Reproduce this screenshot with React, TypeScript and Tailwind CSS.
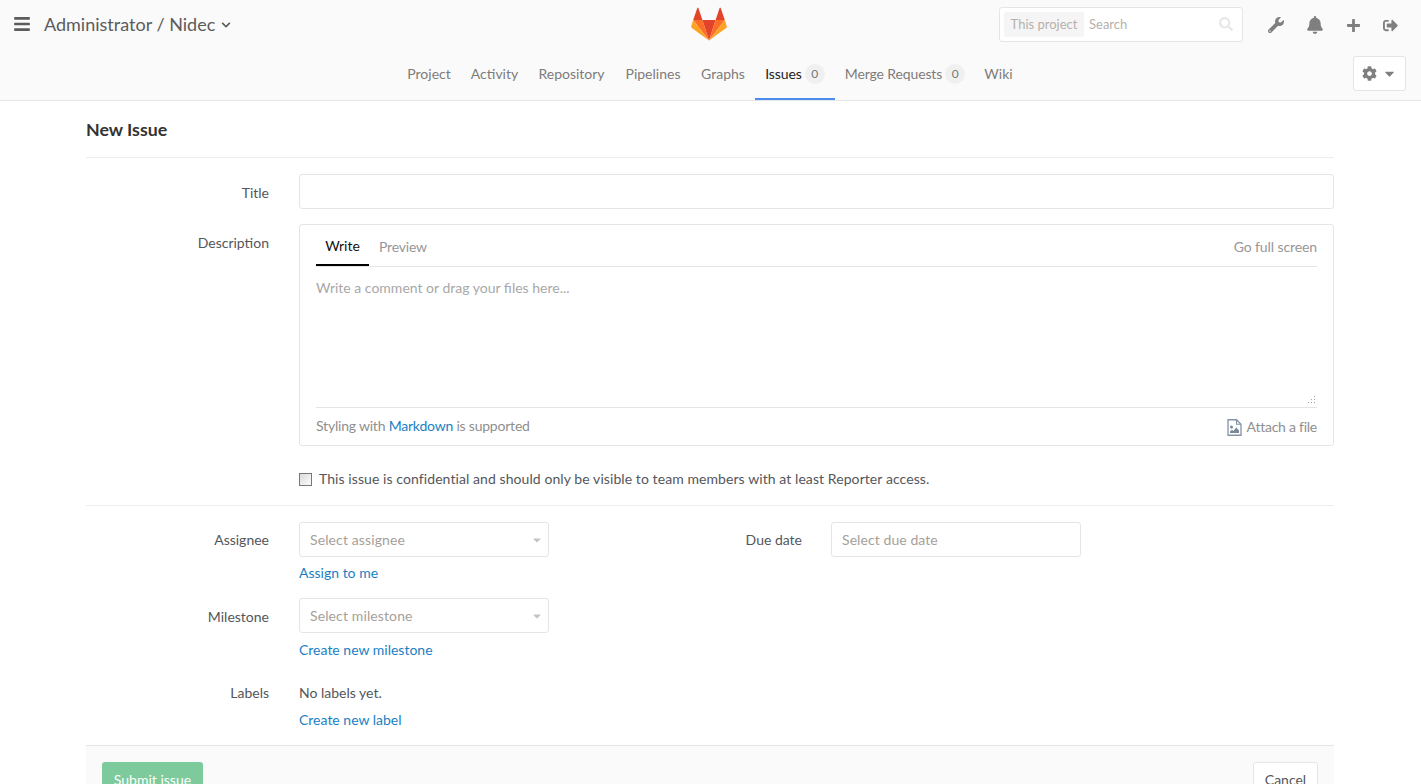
import React from "react";
import { FaBars, FaChevronDown, FaWrench, FaBell, FaPlus, FaSignOutAlt, FaCog, FaCaretDown, FaSearch } from "react-icons/fa";

function Logo() {
  return (
    <svg width="36" height="34" viewBox="0 0 36 34">
      <path d="M18 33.5 L24.6 13 H11.4 Z" fill="#e24329" />
      <path d="M18 33.5 L11.4 13 H2.2 Z" fill="#fc6d26" />
      <path d="M2.2 13 L0.2 19.3 Q0 20.3 0.8 21 L18 33.5 Z" fill="#fca326" />
      <path d="M2.2 13 H11.4 L7.4 1 Q6.9 0 6.3 1 Z" fill="#e24329" />
      <path d="M18 33.5 L24.6 13 H33.8 Z" fill="#fc6d26" />
      <path d="M33.8 13 L35.8 19.3 Q36 20.3 35.2 21 L18 33.5 Z" fill="#fca326" />
      <path d="M33.8 13 H24.6 L28.6 1 Q29.1 0 29.7 1 Z" fill="#e24329" />
    </svg>
  );
}

function FileImageIcon() {
  return (
    <svg width="15" height="17" viewBox="0 0 15 17" className="mr-[5px]">
      <path d="M1 .75 H9.5 L14 5.25 V16.25 H1 Z" fill="none" stroke="#8494a6" strokeWidth="1.3" />
      <path d="M9.5 .75 V5.25 H14" fill="none" stroke="#8494a6" strokeWidth="1.1" />
      <circle cx="4.5" cy="8" r="1.5" fill="#7a8794" />
      <path d="M3 14 V12.5 L5 10.8 L6.4 12 L9.3 8.6 L12 11.4 V14 Z" fill="#7a8794" />
    </svg>
  );
}

function Select({ text }: { text: string }) {
  return (
    <div className="flex h-[35px] w-[250px] items-center justify-between rounded-[3px] border border-[#e5e5e5] bg-white pl-[10px] pr-[5px] tracking-[0.12px] text-[#a6a09a]">
      <span>{text}</span>
      <FaCaretDown className="text-[12px] text-[#c4c4c4]" />
    </div>
  );
}

function Badge() {
  return (
    <span className="ml-[3px] flex h-[20px] w-[20px] items-center justify-center rounded-full bg-[#f0f0f0] text-[12px] text-[#777777]">0</span>
  );
}

export default function App() {
  return (
    <div className="relative h-[784px] overflow-hidden bg-white text-[14px] leading-[20px] text-[#54565b] font-['Lato','Open_Sans',sans-serif]">
      <header className="h-[101px] border-b border-[#e5e5e5] bg-[#fafafa]">
        <div className="grid h-[50px] grid-cols-[1fr_auto_1fr] items-center">
          <div className="flex items-center pb-[2px] pl-[13px]">
            <FaBars className="text-[18px] text-[#5c5c5c]" />
            <span className="ml-[13px] text-[18px] text-[#5c5c5c]">Administrator / Nidec</span>
            <FaChevronDown className="ml-[6px] mt-[2px] text-[10px] text-[#5c5c5c]" />
          </div>
          <div className="mr-[3px] flex justify-center pb-[3px]"><Logo /></div>
          <div className="flex items-center justify-end pr-[22px]">
            <div className="mr-[25px] mb-[1px] flex h-[35px] w-[244px] items-center rounded-[3px] border border-[#e5e5e5] bg-white pb-[1px] pl-[4px] pr-[9px] text-[13px] text-[#b5b1ac]">
              <span className="flex h-[25px] w-[80px] items-center justify-center rounded-[2px] bg-[#f5f5f5]">This project</span>
              <span className="ml-[5px] flex-1">Search</span>
              <FaSearch className="text-[14px] text-[#e8e8e8]" />
            </div>
            <div className="flex w-[131px] items-center justify-between pr-[1px] text-[#7f7f7f]">
              <FaWrench className="text-[16px]" />
              <FaBell className="text-[18px]" />
              <FaPlus className="text-[15px]" />
              <FaSignOutAlt className="text-[15px]" />
            </div>
          </div>
        </div>
        <nav className="relative flex h-[50px] justify-center pr-[2px] text-[#7e7c7a]">
          <a className="flex w-[64px] items-center justify-center pb-[3px]">Project</a>
          <a className="flex w-[67px] items-center justify-center pb-[3px]">Activity</a>
          <a className="flex w-[87px] items-center justify-center pb-[3px]">Repository</a>
          <a className="flex w-[76px] items-center justify-center pb-[3px]">Pipelines</a>
          <a className="flex w-[64px] items-center justify-center pb-[3px]">Graphs</a>
          <a className="flex w-[80px] items-center justify-center border-b-2 border-[#4a8bee] pb-[1px] tracking-[-0.1px] text-[#222222]">
            Issues
            <Badge />
          </a>
          <a className="flex w-[140px] items-center justify-center pb-[3px] tracking-[-0.13px]">
            Merge Requests
            <Badge />
          </a>
          <a className="flex w-[47px] items-center justify-center pb-[3px]">Wiki</a>
          <div className="absolute right-[15px] top-[6px] flex h-[35px] w-[53px] items-center justify-center gap-[5px] rounded-[3px] border border-[#e5e5e5] bg-white text-[#7f7f7f]">
            <FaCog className="text-[15px]" />
            <FaCaretDown className="text-[15px]" />
          </div>
        </nav>
      </header>

      <main className="ml-[86px] w-[1248px]">
        <h3 className="flex h-[57px] items-center border-b border-[#eeeeee] pb-[1px] text-[17.8px] font-bold text-[#333333]">New Issue</h3>

        <div className="mt-[16px] flex">
          <label className="w-[183px] pt-[9px] text-right">Title</label>
          <div className="ml-[30px] h-[35px] flex-1 rounded-[3px] border border-[#e5e5e5] bg-white" />
        </div>

        <div className="mt-[15px] flex">
          <label className="w-[183px] pt-[9px] text-right">Description</label>
          <div className="ml-[30px] h-[222px] flex-1 rounded-[3px] border border-[#e5e5e5] px-[16px]">
            <div className="flex h-[42px] items-stretch border-b border-[#e5e5e5]">
              <span className="flex w-[53px] items-center justify-center border-b-2 border-black pt-[3px] text-[#111111]">Write</span>
              <span className="ml-[10px] flex items-center pt-[2px] tracking-[-0.2px] text-[#979797]">Preview</span>
              <span className="ml-auto flex items-center pt-[2px] tracking-[-0.1px] text-[#979797]">Go full screen</span>
            </div>
            <div className="relative h-[141px] border-b border-[#e5e5e5] pt-[11px] text-[#a8a8a8]">
              Write a comment or drag your files here...
              <svg className="absolute bottom-[2px] right-[1px]" width="9" height="9" viewBox="0 0 9 9" fill="#a8a8a8">
                <rect x="7" y="0" width="1" height="1" /><rect x="4" y="3" width="1" height="1" /><rect x="7" y="3" width="1" height="1" />
                <rect x="1" y="6" width="1" height="1" /><rect x="4" y="6" width="1" height="1" /><rect x="7" y="6" width="1" height="1" />
              </svg>
            </div>
            <div className="flex h-[37px] items-center justify-between text-[#8f8f8f]">
              <span className="pb-[1px] tracking-[-0.21px]">Styling with <a className="text-[#1b7fc4]">Markdown</a> is supported</span>
              <span className="flex items-center pt-[1px] tracking-[-0.25px]">
                <FileImageIcon />
                Attach a file
              </span>
            </div>
          </div>
        </div>

        <div className="ml-[213px] mt-[24px] flex h-[18px] items-center">
          <input type="checkbox" readOnly className="h-[13px] w-[13px] appearance-none border border-[#777777] bg-gradient-to-br from-[#dcdcdc] to-[#fbfbfb]" />
          <span className="ml-[7px] tracking-[0.08px]">This issue is confidential and should only be visible to team members with at least Reporter access.</span>
        </div>

        <div className="mt-[17px] border-t border-[#eeeeee]" />

        <div className="mt-[16px] flex">
          <div className="flex w-[645px]">
            <div className="w-[183px]">
              <label className="block pt-[8px] text-right">Assignee</label>
            </div>
            <div className="ml-[30px]">
              <Select text="Select assignee" />
              <a className="mt-[6px] block text-[#1b7fc4]">Assign to me</a>
            </div>
          </div>
          <label className="w-[71px] pt-[8px] text-right">Due date</label>
          <div className="ml-[29px] flex h-[35px] w-[250px] items-center rounded-[3px] border border-[#e5e5e5] pl-[10px] tracking-[0.08px] text-[#a6a09a]">Select due date</div>
        </div>

        <div className="mt-[15px] flex">
          <label className="w-[183px] pt-[9px] text-right">Milestone</label>
          <div className="ml-[30px]">
            <Select text="Select milestone" />
            <a className="mt-[7px] block text-[#1b7fc4]">Create new milestone</a>
          </div>
        </div>

        <div className="mt-[23px] flex">
          <label className="w-[183px] text-right">Labels</label>
          <div className="ml-[30px]">
            <div>No labels yet.</div>
            <a className="mt-[7px] block text-[#1b7fc4]">Create new label</a>
          </div>
        </div>

        <div className="mt-[15px] flex h-[60px] items-start justify-between border-t border-[#e5e5e5] bg-[#fafafa] px-[16px] pt-[16px]">
          <button className="h-[35px] w-[101px] rounded-[3px] bg-[#7dca9c] text-white">Submit issue</button>
          <button className="h-[35px] w-[65px] rounded-[3px] border border-[#e5e5e5] bg-white text-[#54565b]">Cancel</button>
        </div>
      </main>
    </div>
  );
}
